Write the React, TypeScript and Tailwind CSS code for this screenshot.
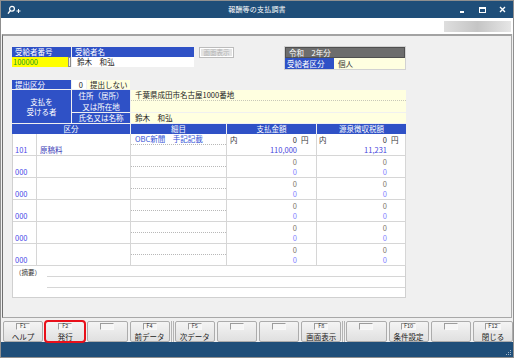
import React from "react";

const blue = "bg-[#2f51c6] text-white";
const yellowSoft = "bg-[#ffffe0]";

type Row = { code: string; name?: string; item?: string; pay: string; tax: string; first?: boolean };

const rows: Row[] = [
  { code: "101", name: "原稿料", item: "OBC新聞　手記記載", pay: "110,000", tax: "11,231", first: true },
  { code: "000", pay: "0", tax: "0" },
  { code: "000", pay: "0", tax: "0" },
  { code: "000", pay: "0", tax: "0" },
  { code: "000", pay: "0", tax: "0" },
  { code: "000", pay: "0", tax: "0" },
];

const fkeys: { key: string; label: string }[][] = [
  [
    { key: "F1", label: "ヘルプ" },
    { key: "F2", label: "発行" },
    { key: "", label: "" },
    { key: "F4", label: "前データ" },
  ],
  [
    { key: "F5", label: "次データ" },
    { key: "", label: "" },
    { key: "", label: "" },
    { key: "F8", label: "画面表示" },
  ],
  [
    { key: "", label: "" },
    { key: "F10", label: "条件設定" },
    { key: "", label: "" },
    { key: "F12", label: "閉じる" },
  ],
];

function TitleBar() {
  return (
    <div className="h-[17px] bg-[#1f4e79] grid grid-cols-[1fr_auto_1fr] items-center text-white">
      <div className="pl-[6px] flex items-center">
        <svg width="14" height="10" viewBox="0 0 14 10">
          <circle cx="5" cy="3.8" r="2.4" fill="none" stroke="white" strokeWidth="1.2" />
          <line x1="3.3" y1="5.6" x2="1" y2="8.6" stroke="white" strokeWidth="1.4" />
          <line x1="9.5" y1="6" x2="13.5" y2="6" stroke="white" strokeWidth="1" />
          <line x1="11.5" y1="4" x2="11.5" y2="8" stroke="white" strokeWidth="1" />
        </svg>
      </div>
      <div className="text-[7px] tracking-[0.2px]">報酬等の支払調書</div>
      <div className="flex justify-end pr-[1px]">
        <div className="w-[20px] h-[17px] flex items-center justify-center">
          <div className="w-[4px] h-[1.5px] bg-white mt-[5px]" />
        </div>
        <div className="w-[20px] h-[17px] flex items-center justify-center">
          <div className="w-[7px] h-[6px] border border-white border-t-2" />
        </div>
        <div className="w-[20px] h-[17px] flex items-center justify-center">
          <svg width="7" height="7" viewBox="0 0 7 7">
            <path d="M1 1 L6 6 M6 1 L1 6" stroke="white" strokeWidth="1.4" />
          </svg>
        </div>
      </div>
    </div>
  );
}

function TopRow() {
  return (
    <div className="h-[21px] flex items-start">
      <div className="w-[59px]">
        <div className={`h-[10px] ${blue} pl-[3px] flex items-center`}>受給者番号</div>
        <div className="h-[10px] flex">
          <div className="w-[56px] bg-[#ffff00] text-[#1f9b1f] pl-[1px] flex items-center">100000</div>
          <div className="w-[3px] bg-[#ececec] border border-[#8c8c8c]" />
        </div>
      </div>
      <div className="w-[122px] ml-px">
        <div className={`h-[10px] ${blue} pl-[3px] flex items-center`}>受給者名</div>
        <div className="h-[10px] bg-white pl-[5px] flex items-center">鈴木　和弘</div>
      </div>
      <div className="ml-[5px] w-[35px] h-[11px] border border-[#bcbcbc] bg-[#e4e4e4] flex items-center justify-center">
        <div className="w-full h-full border border-white flex items-center justify-center text-[6.5px] text-[#b4b4b4]">
          画面表示
        </div>
      </div>
      <div className="ml-[50px] -mt-px w-[122px] border border-[#d2d2d2]">
        <div className="h-[11px] bg-[#6d6d6d] border border-[#505050] text-white pl-[3px] flex items-center">
          令和　2年分
        </div>
        <div className="h-[11px] flex">
          <div className={`w-[49px] ${blue} pl-[2px] flex items-center`}>受給者区分</div>
          <div className={`flex-1 ${yellowSoft} pl-[4px] flex items-center text-[#333]`}>個人</div>
        </div>
      </div>
    </div>
  );
}

function PayeeBlock() {
  return (
    <div className="mt-[12px] w-[394px] flex flex-col gap-px">
      <div className="h-[9px] flex gap-px">
        <div className={`w-[59px] ${blue} pl-[3px] flex items-center`}>提出区分</div>
        <div className="w-[14px] bg-white pr-[3px] flex items-center justify-end">0</div>
        <div className={`w-[43px] ${yellowSoft} pl-[3px] flex items-center`}>提出しない</div>
      </div>
      <div className="flex gap-px">
        <div className={`w-[59px] h-[33px] ${blue} flex flex-col items-center justify-center gap-[3px]`}>
          <span>支払を</span>
          <span>受ける者</span>
        </div>
        <div className="w-[58px] flex flex-col gap-px">
          <div className={`h-[22px] ${blue} flex flex-col items-center justify-center gap-[3px]`}>
            <span>住所（居所）</span>
            <span>又は所在地</span>
          </div>
          <div className={`h-[10px] ${blue} flex items-center justify-center`}>氏名又は名称</div>
        </div>
        <div className="flex-1 flex flex-col gap-px">
          <div className={`h-[22px] ${yellowSoft} flex flex-col`}>
            <div className="h-[11px] pl-[4px] flex items-center border-b border-dotted border-[#c8c8b8]">
              千葉県成田市名古屋1000番地
            </div>
          </div>
          <div className={`h-[10px] ${yellowSoft} pl-[4px] flex items-center`}>鈴木　和弘</div>
        </div>
      </div>
    </div>
  );
}

function Amount({ value, first, pad, lead }: { value: string; first?: boolean; pad: string; lead: string }) {
  return (
    <div className="flex flex-col h-full">
      <div className="h-[11px] flex items-center">
        <span className={`${lead} w-[8px] text-[#333]`}>{first ? "内" : ""}</span>
        <span className={`flex-1 text-right ${first ? "text-[#333]" : "text-[#82796b]"}`}>0</span>
        <span className={`${pad} pl-[4px] text-[#333]`}>{first ? "円" : ""}</span>
      </div>
      <div className="h-[10px] flex items-center">
        <span className={`flex-1 text-right ${first ? "text-[#4545dc]" : "text-[#8585ff]"}`}>{value}</span>
        <span className={pad} />
      </div>
    </div>
  );
}

function DetailTable() {
  return (
    <div className="mt-px w-[394px]">
      <div className="h-[10px] flex gap-px">
        <div className={`w-[118px] ${blue} flex items-center justify-center`}>区分</div>
        <div className={`w-[95px] ${blue} flex items-center justify-center`}>細目</div>
        <div className={`w-[89px] ${blue} flex items-center justify-center`}>支払金額</div>
        <div className={`w-[89px] ${blue} flex items-center justify-center`}>源泉徴収税額</div>
      </div>
      <div className="bg-white border-l border-[#d0d0d0]">
        {rows.map((r, i) => (
          <div key={i} className="h-[22px] flex border-b border-[#d6d6d6]">
            <div className="w-[24px] border-r border-[#d6d6d6] flex flex-col">
              <div className="h-[11px]" />
              <div className="h-[10px] pl-[2px] flex items-center text-[#4a4ae8]">{r.code}</div>
            </div>
            <div className="w-[94px] border-r border-[#d6d6d6] flex flex-col">
              <div className="h-[11px]" />
              <div className="h-[10px] pl-[3px] flex items-center text-[#3c3cb8]">{r.name ?? ""}</div>
            </div>
            <div className="w-[96px] border-r border-[#d6d6d6] flex flex-col">
              <div className="h-[11px] pl-[4px] flex items-center border-b border-dotted border-[#b8b8b8] text-[#2f4fd6]">
                {r.item ?? ""}
              </div>
            </div>
            <div className="w-[90px] border-r border-[#d6d6d6]">
              <Amount value={r.pay} first={r.first} pad="w-[19px]" lead="pl-[3px]" />
            </div>
            <div className="w-[89px] border-r border-[#d6d6d6]">
              <Amount value={r.tax} first={r.first} pad="w-[18px]" lead="pl-[2px]" />
            </div>
          </div>
        ))}
        <div className="h-[32px] flex border-b border-r border-[#d0d0d0]">
          <div className="w-[34px] pl-[2px] pt-[3px] text-[6.5px] text-[#333]">（摘要）</div>
          <div className="flex-1 flex flex-col">
            <div className="h-[11px] border-b border-[#d6d6d6]" />
            <div className="h-[11px] border-b border-[#d6d6d6]" />
          </div>
        </div>
      </div>
    </div>
  );
}

function FKey({ k, label, mark }: { k: string; label: string; mark?: boolean }) {
  return (
    <div className="relative flex-1 h-[21px] rounded-[2px] border border-[#acacac] bg-linear-to-b from-[#f4f4f4] to-[#e0e0e0] flex flex-col items-center pt-px">
      <div className="h-[7px] min-w-[14px] px-[2px] border border-[#9c9c9c] border-r-[#f8f8f8] border-b-[#f8f8f8] bg-[#f6f6f6] text-[5.5px] text-[#333] flex items-center justify-center">
        {k}
      </div>
      <div className="mt-[3px] text-[7.5px] text-[#222]">{label}</div>
      {mark && <div className="absolute -inset-[2px] border-2 border-[#e8101a] rounded-[4px]" />}
    </div>
  );
}

function FKeyBar() {
  return (
    <div className="h-[24px] pt-[3px] pl-[2px] flex items-start">
      {fkeys.map((g, gi) => (
        <React.Fragment key={gi}>
          {gi > 0 && (
            <div className="w-[5px] h-[21px] flex justify-center gap-px">
              <div className="w-px bg-[#b4b4b4]" />
              <div className="w-px bg-[#b4b4b4]" />
            </div>
          )}
          <div className="flex-1 flex gap-[2px]">
            {g.map((f, fi) => (
              <FKey key={fi} k={f.key} label={f.label} mark={f.key === "F2"} />
            ))}
          </div>
        </React.Fragment>
      ))}
    </div>
  );
}

export default function App() {
  return (
    <div className="w-[514px] h-[358px] flex flex-col border border-[#8f8f8f] bg-[#f0f0f0] font-['Noto_Sans_CJK_JP',sans-serif] text-[7.5px] leading-none text-[#222] overflow-hidden">
      <TitleBar />
      <div className="h-[16px] bg-white flex items-start justify-end pt-[3px] pr-[2px]">
        <div className="w-[67px] h-[11px] bg-linear-to-r from-[#dedede] via-[#c5c5c5] to-[#e6e6e6]" />
      </div>
      <div className="flex-1 mx-px border-t-2 border-t-[#a3a3a3] border-l border-l-[#6f6f6f] border-r border-r-[#a8a8a8] border-b border-b-[#a8a8a8] pl-[9px] pt-[11px]">
        <TopRow />
        <PayeeBlock />
        <DetailTable />
      </div>
      <FKeyBar />
      <div className="h-[15px] bg-[#1f4e79] flex items-end justify-end pr-px pb-px">
        <svg width="7" height="7" viewBox="0 0 7 7">
          <rect x="5" y="1" width="1" height="1" fill="#9fb3c8" />
          <rect x="3" y="3" width="1" height="1" fill="#9fb3c8" />
          <rect x="5" y="3" width="1" height="1" fill="#9fb3c8" />
          <rect x="1" y="5" width="1" height="1" fill="#9fb3c8" />
          <rect x="3" y="5" width="1" height="1" fill="#9fb3c8" />
          <rect x="5" y="5" width="1" height="1" fill="#9fb3c8" />
        </svg>
      </div>
    </div>
  );
}
